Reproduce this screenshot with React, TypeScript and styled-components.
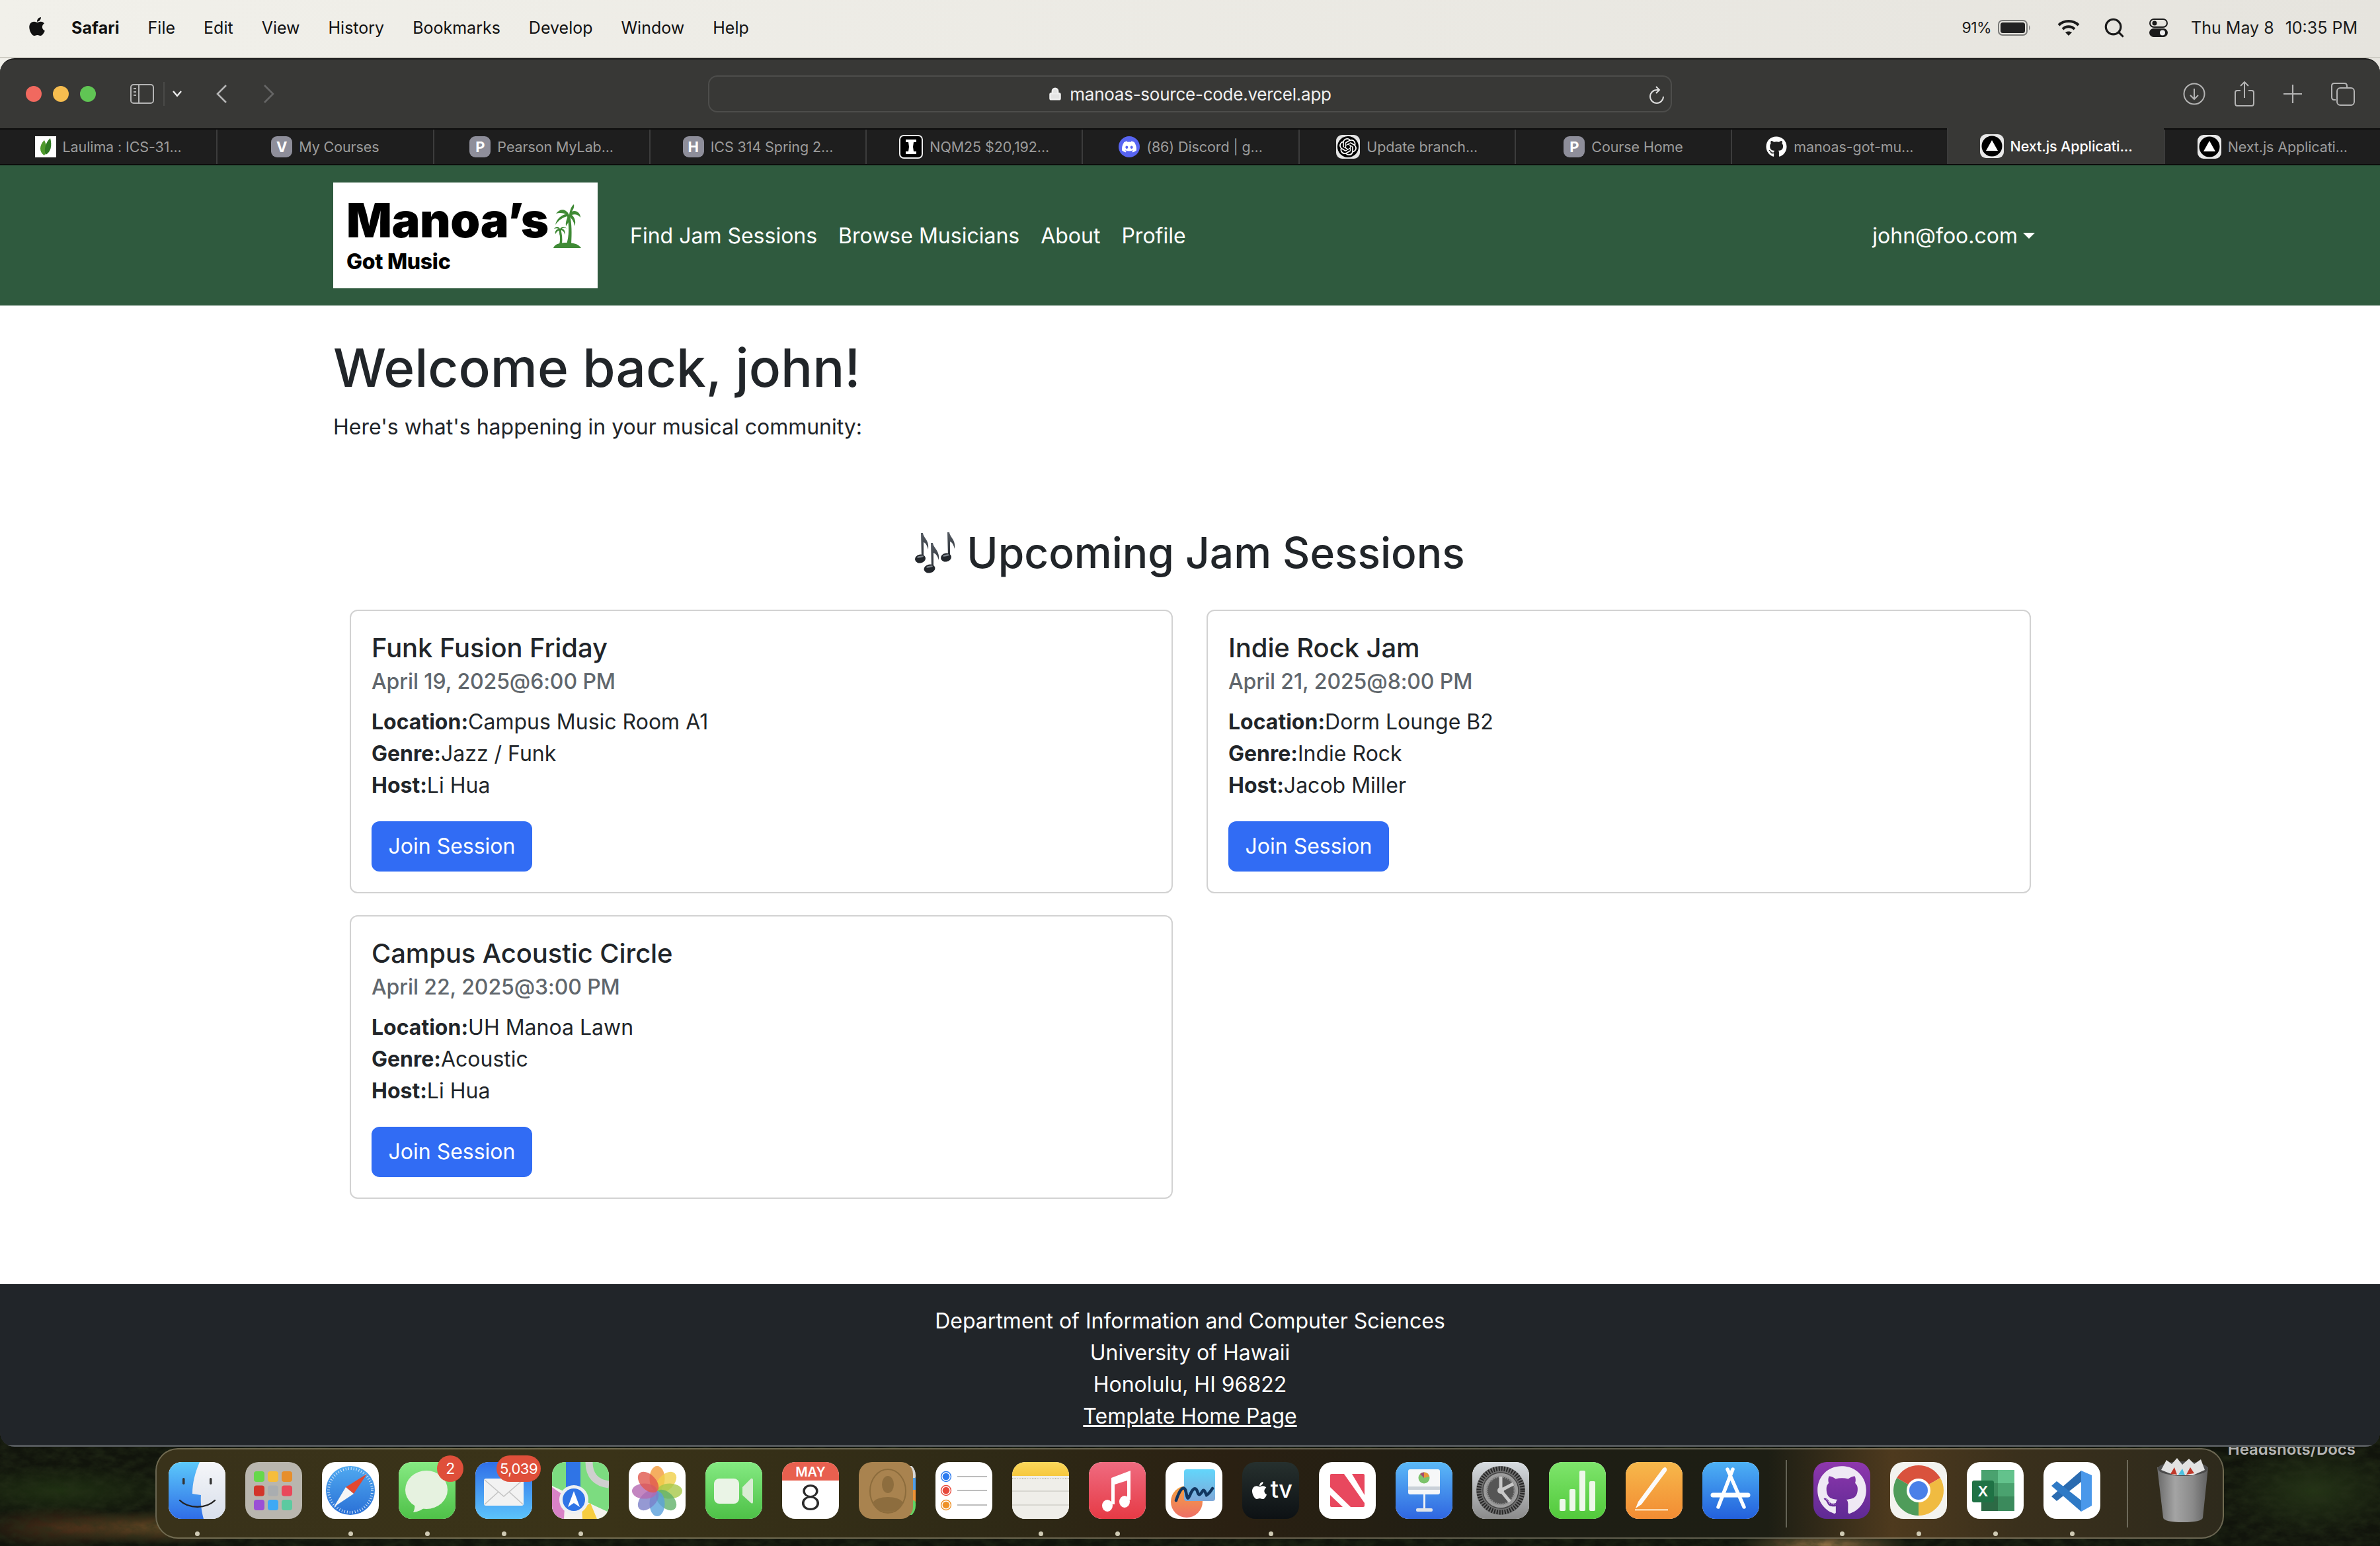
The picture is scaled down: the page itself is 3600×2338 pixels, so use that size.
import React from "react";
import styled, { createGlobalStyle } from "styled-components";
import { FaApple, FaDiscord, FaGithub } from "react-icons/fa";
import { SiOpenai } from "react-icons/si";
import { Lock, Search } from "lucide-react";

const GlobalStyle = createGlobalStyle`
  html, body { margin: 0; padding: 0; background: #12160c; }
  body { font-family: Inter, "Liberation Sans", sans-serif; color: #212529; }
  * { box-sizing: border-box; }
`;

const Desktop = styled.div`
  position: relative;
  width: 3600px;
  height: 2338px;
  overflow: hidden;
  display: flex;
  flex-direction: column;
  background: linear-gradient(90deg, #f1f0ea, #e6e4de) top / 100% 200px no-repeat, #12160c;
`;

/* ---- menu bar ---- */
const MenuBar = styled.header`
  flex: none;
  height: 88px;
  display: flex;
  align-items: center;
  padding: 0 34px 2px 42px;
  font-size: 25px;
  color: #111;
  border-bottom: 2px solid #cfcdc5;
`;
const AppleMark = styled(FaApple)`
  width: 28px;
  height: 32px;
  margin-right: 38px;
  margin-top: -4px;
`;
const MenuItems = styled.nav`
  display: flex;
  gap: 43px;
`;
const MenuItem = styled.span<{ $bold?: boolean }>`
  font-weight: ${(p) => (p.$bold ? 700 : 400)};
  letter-spacing: ${(p) => (p.$bold ? "0.1px" : "0")};
`;
const StatusArea = styled.div`
  margin-left: auto;
  display: flex;
  align-items: center;
  color: #1a1a1a;
`;
const BatteryText = styled.span`
  font-size: 23px;
  letter-spacing: -0.5px;
  margin-right: 10px;
`;
const StatusSlot = styled.span<{ $gap: number }>`
  display: flex;
  margin-left: ${(p) => p.$gap}px;
`;
const StatusClock = styled.span`
  margin-left: 35px;
  font-size: 25px;
  display: flex;
  gap: 17px;
`;

/* ---- browser window ---- */
const BrowserWindow = styled.div`
  position: relative;
  z-index: 1;
  flex: none;
  height: 2100px;
  display: flex;
  flex-direction: column;
  border-radius: 22px;
  overflow: hidden;
  border-top: 2px solid #1a1a1a;
  background: #383836;
`;
const Toolbar = styled.div`
  flex: none;
  height: 104px;
  display: grid;
  grid-template-columns: 1fr 1458px 1fr;
  align-items: center;
  background: #383836;
`;
const ToolbarLeft = styled.div`
  display: flex;
  align-items: center;
  padding-left: 39px;
  color: #b4b4b4;
`;
const ToolSlot = styled.span<{ $gap: number; $color?: string }>`
  display: flex;
  margin-left: ${(p) => p.$gap}px;
  color: ${(p) => p.$color || "inherit"};
`;
const ToolDivider = styled.span`
  width: 2px;
  height: 36px;
  margin-left: 14px;
  background: #4a4a48;
`;
const ToolbarRight = styled.div`
  display: flex;
  align-items: center;
  justify-content: flex-end;
  gap: 44px;
  padding-right: 38px;
  color: #b4b4b4;
`;
const TrafficLights = styled.div`
  display: flex;
  gap: 17px;
  margin-right: 52px;
`;
const TrafficLight = styled.span<{ $color: string }>`
  width: 24px;
  height: 24px;
  border-radius: 50%;
  background: ${(p) => p.$color};
`;
const AddressBar = styled.div`
  position: relative;
  height: 56px;
  display: flex;
  align-items: center;
  justify-content: center;
  gap: 12px;
  border: 2px solid #4d4d4b;
  border-radius: 14px;
  color: #f0f0f0;
  font-size: 26px;
  letter-spacing: -0.25px;
`;
const ReloadSlot = styled.span`
  position: absolute;
  right: 9px;
  top: 14px;
  color: #dcdcdc;
  display: flex;
`;
const TabStrip = styled.div`
  flex: none;
  height: 56px;
  display: grid;
  grid-template-columns: repeat(11, 1fr);
  background: #1e1e1e;
  border-top: 2px solid #0c0c0c;
  border-bottom: 2px solid #0c0c0c;
`;
const Tab = styled.div<{ $active?: boolean }>`
  display: flex;
  align-items: center;
  justify-content: center;
  gap: 10px;
  font-size: 21.5px;
  letter-spacing: -0.1px;
  white-space: nowrap;
  color: ${(p) => (p.$active ? "#fff" : "#9c9c9c")};
  font-weight: ${(p) => (p.$active ? 500 : 400)};
  background: ${(p) => (p.$active ? "#383836" : "transparent")};
  border-left: 2px solid #3c3c3c;
  margin-top: ${(p) => (p.$active ? "-2px" : "0")};
  &:first-child { border-left: none; }
`;
const FavLetter = styled.span`
  width: 32px;
  height: 32px;
  border-radius: 9px;
  background: #8e8e9a;
  color: #fff;
  font-size: 22px;
  font-weight: 700;
  display: flex;
  align-items: center;
  justify-content: center;
`;
const FavDiscord = styled.span`
  width: 32px;
  height: 32px;
  border-radius: 50%;
  background: #5865f2;
  color: #fff;
  display: flex;
  align-items: center;
  justify-content: center;
`;
const FavRound = styled.span`
  width: 36px;
  height: 36px;
  border-radius: 9px;
  background: #e4e4e4;
  display: flex;
  align-items: center;
  justify-content: center;
`;
const FavDisc = styled.span`
  width: 32px;
  height: 32px;
  border-radius: 50%;
  background: #000;
  color: #fff;
  display: flex;
  align-items: center;
  justify-content: center;
`;

/* ---- site navbar ---- */
const SiteNav = styled.nav`
  flex: none;
  height: 212px;
  background: #2f5a3e;
  display: flex;
  align-items: center;
  padding: 0 522px 0 504px;
  color: #fff;
  font-size: 32px;
`;
const Logo = styled.div`
  width: 400px;
  height: 160px;
  margin-right: 49px;
  background: #fff;
  color: #000;
  display: flex;
  flex-direction: column;
  padding: 21px 0 0 20px;
  position: relative;
`;
const LogoTitle = styled.span`
  font-size: 72px;
  line-height: 72px;
  font-weight: 900;
  letter-spacing: -0.4px;
`;
const LogoSub = styled.span`
  margin-top: 9px;
  font-size: 32px;
  line-height: 36px;
  font-weight: 800;
  letter-spacing: -0.3px;
`;
const PalmSlot = styled.span`
  position: absolute;
  left: 333px;
  top: 33px;
  display: flex;
`;
const NavLinks = styled.div`
  display: flex;
  gap: 32px;
`;
const NavLink = styled.a`
  color: #fff;
  text-decoration: none;
`;
const UserMenu = styled.div`
  margin-left: auto;
  display: flex;
  align-items: center;
  gap: 8px;
`;
const Caret = styled.span`
  width: 0;
  height: 0;
  border-left: 9px solid transparent;
  border-right: 9px solid transparent;
  border-top: 9px solid #fff;
`;

/* ---- page ---- */
const Main = styled.main`
  flex: none;
  height: 1480px;
  background: #fff;
  padding: 46px 504px 0;
`;
const Title = styled.h1`
  margin: 0 0 18px;
  font-size: 80px;
  line-height: 96px;
  font-weight: 500;
`;
const Lead = styled.p`
  margin: 0 0 127px;
  font-size: 32px;
  line-height: 48px;
`;
const SectionHead = styled.h2`
  margin: 0 0 48px;
  display: flex;
  align-items: center;
  justify-content: center;
  gap: 16px;
  font-size: 64px;
  line-height: 77px;
  font-weight: 500;
`;
const CardGrid = styled.div`
  margin-left: 25px;
  display: grid;
  grid-template-columns: 1245px 1247px;
  column-gap: 51px;
  row-gap: 33px;
  align-items: start;
`;
const Card = styled.article`
  height: 429px;
  border: 2px solid #d2d2d2;
  border-radius: 12px;
  padding: 32px 32px 32px 31px;
`;
const CardTitle = styled.h5`
  margin: 0 0 8px;
  font-size: 40px;
  line-height: 48px;
  font-weight: 500;
  letter-spacing: -0.1px;
`;
const CardDate = styled.h6`
  margin: 0 0 18px;
  font-size: 32px;
  line-height: 38px;
  font-weight: 500;
  color: #61676d;
  letter-spacing: -0.1px;
`;
const CardLine = styled.div`
  font-size: 32px;
  line-height: 48px;
  strong { font-weight: 700; }
`;
const JoinButton = styled.button`
  display: block;
  margin-top: 30px;
  height: 76px;
  width: 243px;
  padding: 0;
  border: none;
  border-radius: 12px;
  background: #316cf4;
  color: #fff;
  font: 400 32px/48px Inter, "Liberation Sans", sans-serif;
`;
const Footer = styled.footer`
  flex: 1;
  background: #212529;
  color: #fff;
  padding-top: 32px;
  text-align: center;
  font-size: 32px;
  line-height: 48px;
  border-bottom: 3px solid #55595c;
  a { color: #fff; text-decoration: underline; }
`;

/* ---- wallpaper and dock ---- */
const DesktopStrip = styled.div`
  position: relative;
  flex: 1;
  margin-top: -24px;
  padding: 26px 0 0 235px;
  background:
    radial-gradient(ellipse 170px 26px at 240px 146px, #6a4a26 0, transparent 100%),
    radial-gradient(ellipse 130px 20px at 2760px 172px, #8e6f45 0, transparent 100%),
    radial-gradient(ellipse 130px 32px at 90px 146px, #4a2c18 0, transparent 100%),
    radial-gradient(ellipse 190px 40px at 90px 90px, #1f3012 0, transparent 100%),
    radial-gradient(ellipse 140px 70px at 3500px 90px, #243416 0, transparent 100%),
    #11140c;
`;
const GrainLayer = styled.svg`
  position: absolute;
  inset: 0;
  opacity: 0.55;
`;
const DesktopLabel = styled.span`
  position: absolute;
  right: 37px;
  top: 16px;
  font-size: 24px;
  line-height: 24px;
  font-weight: 600;
  color: #b4b4b4;
  white-space: nowrap;
`;
const Dock = styled.div`
  position: relative;
  width: 3129px;
  height: 137px;
  display: flex;
  align-items: flex-start;
  gap: 30px;
  padding: 19px 0 0 18px;
  border: 2px solid rgba(205, 200, 170, 0.38);
  border-radius: 34px;
  background: linear-gradient(
    90deg,
    #39321a 0%,
    #3a3318 22%,
    #2f2a16 40%,
    #2a2012 52%,
    #1e1e14 66%,
    #1d1e14 78%,
    #4e3a1e 84%,
    #3a301c 90%,
    #2e2a1c 100%
  );
`;
const DockSlot = styled.div<{ $running?: boolean }>`
  position: relative;
  flex: none;
  width: 86px;
  height: 86px;
  &::after {
    content: "";
    display: ${(p) => (p.$running ? "block" : "none")};
    position: absolute;
    left: 40px;
    top: 105px;
    width: 7px;
    height: 7px;
    border-radius: 50%;
    background: #cfcab4;
  }
`;
const Tile = styled.div<{ $bg?: string }>`
  width: 86px;
  height: 86px;
  border-radius: 20px;
  overflow: hidden;
  background: ${(p) => p.$bg || "#fff"};
  display: flex;
  align-items: center;
  justify-content: center;
  svg { display: block; flex: none; }
`;
const Badge = styled.span`
  position: absolute;
  top: -10px;
  right: -12px;
  min-width: 40px;
  height: 40px;
  padding: 0 7px;
  border-radius: 20px;
  background: #df4f3a;
  color: #fff;
  font-size: 23px;
  line-height: 40px;
  text-align: center;
  letter-spacing: -0.5px;
`;
const WideBadge = styled(Badge)`
  right: -13px;
  min-width: 67px;
  padding: 0 4px;
  font-size: 22px;
`;
const DockDivider = styled.span`
  flex: none;
  width: 2px;
  height: 102px;
  margin: -3px 10px 0;
  background: rgba(220, 220, 205, 0.35);
`;
const TrashArt = styled.svg`
  display: block;
  margin-top: -6px;
`;

const Icon = ({ children }: { children: React.ReactNode }) => (
  <svg viewBox="0 0 86 86" width="86" height="86">
    {children}
  </svg>
);

const Grad = ({ id, from, to }: { id: string; from: string; to: string }) => (
  <defs>
    <linearGradient id={id} x1="0" y1="0" x2="0" y2="1">
      <stop offset="0" stopColor={from} />
      <stop offset="1" stopColor={to} />
    </linearGradient>
  </defs>
);

const FinderIcon = () => (
  <Icon>
    <Grad id="fa" from="#5cc9fb" to="#2f6de6" />
    <Grad id="fb" from="#f5f6f9" to="#d8dfeb" />
    <rect width="86" height="86" fill="url(#fb)" />
    <path d="M0 0H47C40 16 36 32 36 48L49 50C48 62 50 76 53 86H0Z" fill="url(#fa)" />
    <rect x="21" y="24" width="3.5" height="10" rx="1.7" fill="#333" />
    <rect x="62" y="24" width="3.5" height="10" rx="1.7" fill="#333" />
    <path d="M17 58C30 71 57 71 70 58" fill="none" stroke="#222" strokeWidth="2.4" strokeLinecap="round" />
  </Icon>
);

const launchColors = [
  ["#66d84a", "#f5bd3b", "#e78f2c"],
  ["#d2352a", "#a9adb0", "#e9485a"],
  ["#9a4fd6", "#3fa9f5", "#5ccaa0"],
];
const LaunchpadIcon = () => (
  <Icon>
    {launchColors.map((row, r) =>
      row.map((c, i) => (
        <rect key={c} x={13 + i * 21} y={14 + r * 21.5} width="16" height="16" rx="4" fill={c} />
      )),
    )}
  </Icon>
);

const SafariIcon = () => (
  <Icon>
    <Grad id="sa" from="#4fa9f0" to="#2a70d6" />
    <circle cx="43" cy="43" r="37" fill="url(#sa)" />
    <circle cx="43" cy="43" r="33" fill="none" stroke="#dcecfb" strokeWidth="4" strokeDasharray="1 3" />
    <polygon points="68,18 36,38 48,48" fill="#e2482f" />
    <polygon points="18,68 36,38 48,48" fill="#f5f5f5" />
  </Icon>
);

const MessagesIcon = () => (
  <Icon>
    <Grad id="ma" from="#86ea83" to="#4fc148" />
    <rect width="86" height="86" fill="url(#ma)" />
    <ellipse cx="42" cy="42" rx="32" ry="29" fill="#e6f2e0" />
    <path d="M24 62C25 68 24 72 22 76C30 75 36 72 40 68Z" fill="#e6f2e0" />
  </Icon>
);

const MailIcon = () => (
  <Icon>
    <Grad id="ml" from="#2f6fe8" to="#5cc3fb" />
    <rect width="86" height="86" fill="url(#ml)" />
    <rect x="13" y="25" width="60" height="41" rx="3" fill="#f2f2f2" />
    <path d="M14 27L43 52L72 27M14 64L35 45M72 64L51 45" fill="none" stroke="#c4c4c4" strokeWidth="1.6" />
  </Icon>
);

const MapsIcon = () => (
  <Icon>
    <rect width="86" height="86" fill="#7cdc80" />
    <path d="M0 36L86 76V86H0Z" fill="#f4f2ee" />
    <polygon points="0,38 20,52 18,86 0,86" fill="#d982c6" />
    <polygon points="45,70 58,62 68,86 46,86" fill="#f6cd3f" />
    <path d="M56 0C56 22 68 32 86 34" fill="none" stroke="#cfcfcf" strokeWidth="11" />
    <rect x="21" y="0" width="22" height="38" fill="#2f74e6" />
    <circle cx="33" cy="57" r="22" fill="#eef0f2" />
    <circle cx="33" cy="57" r="17" fill="#2f74e6" />
    <path d="M33 44L42 68L33 62L24 68Z" fill="#fff" />
  </Icon>
);

const petals = ["#f29a38", "#f0d048", "#a8c84a", "#62b26a", "#5aa0dc", "#7a80c8", "#b468b0", "#e0574e"];
const PhotosIcon = () => (
  <Icon>
    {petals.map((c, i) => (
      <ellipse key={c} cx="43" cy="25" rx="11.5" ry="19" fill={c} opacity="0.8" transform={`rotate(${i * 45} 43 44)`} />
    ))}
  </Icon>
);

const FaceTimeIcon = () => (
  <Icon>
    <Grad id="ft" from="#84ea82" to="#4ec147" />
    <rect width="86" height="86" fill="url(#ft)" />
    <rect x="13" y="25" width="38" height="38" rx="8" fill="#eaf4e6" />
    <path d="M56 38L69 25Q72 24 72 28V60Q72 64 69 62L56 50Z" fill="#d9ecd4" />
  </Icon>
);

const CalendarArt = styled.svg`
  text { font-family: Inter, "Liberation Sans", sans-serif; text-anchor: middle; }
`;
const CalendarIcon = () => (
  <CalendarArt viewBox="0 0 86 86" width="86" height="86">
    <rect width="86" height="28" fill="#e8604f" />
    <text x="43" y="22" fontSize="20" fontWeight="600" fill="#fff">MAY</text>
    <text x="43" y="73" fontSize="54" fontWeight="300" fill="#2b2b2b">8</text>
  </CalendarArt>
);

const ContactsIcon = () => (
  <Icon>
    <rect x="70" y="6" width="16" height="20" rx="4" fill="#d8d8d8" />
    <rect x="70" y="24" width="16" height="18" fill="#4f9ee8" />
    <rect x="70" y="42" width="16" height="18" fill="#ee9234" />
    <rect x="70" y="58" width="16" height="22" rx="4" fill="#62d462" />
    <rect x="0" y="0" width="82" height="86" rx="18" fill="#a9834f" />
    <ellipse cx="44" cy="44" rx="27" ry="33" fill="none" stroke="#8c6c3c" strokeWidth="2" />
    <ellipse cx="44" cy="34" rx="9" ry="13" fill="#8d6d3e" />
    <path d="M21 62C26 50 62 50 67 62C60 80 28 80 21 62Z" fill="#8d6d3e" />
  </Icon>
);

const remindRows = [
  { y: 22, c: "#2d7cf0" },
  { y: 43, c: "#e84a3c" },
  { y: 65, c: "#ee9229" },
];
const RemindersIcon = () => (
  <Icon>
    {remindRows.map((r) => (
      <g key={r.y}>
        <circle cx="16" cy={r.y} r="7.5" fill="none" stroke={r.c} strokeWidth="1.4" />
        <circle cx="16" cy={r.y} r="5.3" fill={r.c} />
        <rect x="33" y={r.y - 1} width="45" height="2" fill="#bdbdbd" />
      </g>
    ))}
  </Icon>
);

const NotesIcon = () => (
  <Icon>
    <Grad id="nt" from="#fbd75c" to="#f6c83d" />
    <rect width="86" height="21" fill="url(#nt)" />
    <rect y="21" width="86" height="65" fill="#efeee9" />
    <line x1="0" y1="25" x2="86" y2="25" stroke="#bdbcb5" strokeWidth="2" strokeDasharray="1 1.5" />
    <rect y="43" width="86" height="2" fill="#d8d7d1" />
    <rect y="64" width="86" height="2" fill="#d8d7d1" />
  </Icon>
);

const MusicIcon = () => (
  <Icon>
    <Grad id="mu" from="#ef6b80" to="#e63a45" />
    <rect width="86" height="86" fill="url(#mu)" />
    <path d="M34 24L63 13V57H58V28L39 34V64H34Z" fill="#fff" />
    <ellipse cx="28" cy="66" rx="8" ry="9" fill="#fff" />
    <ellipse cx="54" cy="60" rx="8" ry="9" fill="#fff" />
  </Icon>
);

const FreeformIcon = () => (
  <Icon>
    <Grad id="ffa" from="#f4a341" to="#ee6f66" />
    <Grad id="ffb" from="#62d6fb" to="#7fa8d8" />
    <circle cx="32" cy="60" r="24" fill="url(#ffa)" />
    <rect x="28" y="11" width="47" height="48" rx="4" fill="url(#ffb)" />
    <path d="M16 58C20 46 26 34 30 42C33 52 32 60 37 50C40 42 45 36 48 44C50 52 52 50 56 44C58 40 60 46 62 50C66 48 68 44 71 40" fill="none" stroke="#12365f" strokeWidth="4.5" strokeLinecap="round" />
  </Icon>
);

const TvWord = styled.span`
  color: #fff;
  font-size: 36px;
  font-weight: 500;
  letter-spacing: -0.5px;
  margin-left: 2px;
  margin-top: -4px;
`;
const TvIcon = () => (
  <>
    <FaApple color="#fff" size={30} />
    <TvWord>tv</TvWord>
  </>
);

const NewsIcon = () => (
  <Icon>
    <rect x="17" y="18" width="52" height="50" rx="2" fill="#e8485e" />
    <polygon points="38,18 50,18 69,50 69,62" fill="#fff" />
    <polygon points="17,38 17,50 36,68 48,68" fill="#fff" />
  </Icon>
);

const KeynoteIcon = () => (
  <Icon>
    <Grad id="kn" from="#5bb9f8" to="#2f66e0" />
    <rect width="86" height="86" fill="url(#kn)" />
    <rect x="42" y="48" width="3" height="24" fill="#eef2f6" />
    <rect x="31" y="70" width="25" height="5" rx="2" fill="#dfe4e9" />
    <rect x="19" y="11" width="48" height="38" rx="3" fill="#f6f7f8" />
    <rect x="19" y="37" width="48" height="5" fill="#c9d0d8" />
    <circle cx="43" cy="24" r="8.5" fill="#7cc36b" />
    <path d="M43 24V15.5A8.5 8.5 0 0 1 51 22Z" fill="#e8963a" />
    <path d="M43 24L37 18A8.5 8.5 0 0 1 43 15.5Z" fill="#a84c6a" />
  </Icon>
);

const SettingsIcon = () => (
  <Icon>
    <Grad id="st" from="#d8dde1" to="#8a8a8a" />
    <rect width="86" height="86" fill="url(#st)" />
    <circle cx="43" cy="43" r="37" fill="#6f6f6f" />
    <circle cx="43" cy="43" r="33" fill="none" stroke="#262626" strokeWidth="7" strokeDasharray="2 2" />
    <circle cx="43" cy="43" r="27" fill="#9d9d9d" stroke="#444" strokeWidth="1.5" />
    <circle cx="43" cy="43" r="21" fill="#555" />
    <circle cx="43" cy="43" r="21" fill="none" stroke="#8a8a8a" strokeWidth="3" strokeDasharray="2 1.5" />
    <path d="M43 43V22M43 43L62 33M43 43L57 60" stroke="#c9c9c9" strokeWidth="5" fill="none" />
    <circle cx="43" cy="43" r="5" fill="#c9c9c9" />
  </Icon>
);

const numberBars = [
  { x: 16, y: 56 },
  { x: 31, y: 41 },
  { x: 46, y: 13 },
  { x: 61, y: 29 },
];
const NumbersIcon = () => (
  <Icon>
    <Grad id="nb" from="#7ee56c" to="#52c93b" />
    <rect width="86" height="86" fill="url(#nb)" />
    {numberBars.map((b) => (
      <rect key={b.x} x={b.x} y={b.y} width="9" height={74 - b.y} rx="2" fill="#eef8ea" />
    ))}
  </Icon>
);

const PagesIcon = () => (
  <Icon>
    <Grad id="pg" from="#f7b84b" to="#f28c33" />
    <rect width="86" height="86" fill="url(#pg)" />
    <rect x="14" y="71" width="50" height="2.5" fill="#fbd9ae" />
    <path d="M15 70L19 60L56 10Q60 6 62 10Q63 13 60 16L24 64Z" fill="#fbfbfb" />
  </Icon>
);

const AppStoreIcon = () => (
  <Icon>
    <Grad id="as" from="#4db1f5" to="#2360dc" />
    <rect width="86" height="86" fill="url(#as)" />
    <path d="M46 11L24 68M38 11L63 68" stroke="#fff" strokeWidth="5.5" strokeLinecap="round" />
    <path d="M16 50H69" stroke="#fff" strokeWidth="7" strokeLinecap="round" />
  </Icon>
);

const GithubTile = styled(FaGithub)`
  color: #efe9f4;
`;
const GithubDesktopIcon = () => <GithubTile size={76} />;

const ChromeIcon = () => (
  <Icon>
    <path d="M10.1 24A38 38 0 0 1 75.9 24L43 43Z" fill="#d9523d" />
    <path d="M75.9 24A38 38 0 0 1 43 81L43 43Z" fill="#f0bb41" />
    <path d="M43 81A38 38 0 0 1 10.1 24L43 43Z" fill="#4f9c5a" />
    <circle cx="43" cy="43" r="18" fill="#fff" />
    <circle cx="43" cy="43" r="14" fill="#4a80e8" />
  </Icon>
);

const ExcelArt = styled.svg`
  text { font-family: Inter, "Liberation Sans", sans-serif; text-anchor: middle; }
`;
const ExcelIcon = () => (
  <ExcelArt viewBox="0 0 86 86" width="86" height="86">
    <rect x="22" y="12" width="50" height="20" fill="#4aa26f" />
    <rect x="47" y="12" width="25" height="20" fill="#63c28c" />
    <rect x="22" y="32" width="50" height="20" fill="#3b8a5c" />
    <rect x="47" y="32" width="25" height="20" fill="#4aa26f" />
    <rect x="22" y="52" width="50" height="22" fill="#2c6a45" />
    <rect x="47" y="52" width="25" height="22" fill="#3b8a5c" />
    <rect x="8" y="28" width="33" height="33" rx="3" fill="#1f7245" />
    <text x="24.5" y="52" fontSize="22" fontWeight="600" fill="#fff">X</text>
  </ExcelArt>
);

const VsCodeIcon = () => (
  <Icon>
    <polygon points="57,13 12,52 20,59 57,30" fill="#2a6bb0" />
    <polygon points="12,36 20,29 57,58 57,75" fill="#2f7ac6" />
    <polygon points="57,13 73,20 73,66 57,75" fill="#4a98ea" />
  </Icon>
);

const TrashIcon = () => (
  <TrashArt viewBox="0 0 86 97" width="86" height="97">
    <defs>
      <linearGradient id="tr" x1="0" y1="0" x2="1" y2="0">
        <stop offset="0" stopColor="#6a6a6a" />
        <stop offset="0.35" stopColor="#a4a4a4" />
        <stop offset="0.7" stopColor="#8a8a8a" />
        <stop offset="1" stopColor="#606060" />
      </linearGradient>
    </defs>
    <path d="M4 14L13 90Q14 97 43 97Q72 97 73 90L81 14Z" fill="url(#tr)" />
    <ellipse cx="43" cy="16" rx="38" ry="11" fill="#4c4c4c" />
    <path d="M10 18L18 3L26 9L34 0L42 10L52 1L60 9L70 2L76 18L58 26L30 26Z" fill="#e2e2e2" />
    <path d="M24 24L30 14L34 25ZM48 25L54 14L60 23Z" fill="#c0392b" />
    <path d="M36 25L42 16L46 26Z" fill="#4ac0e0" />
  </TrashArt>
);

const PalmTree = () => (
  <svg viewBox="0 0 42 66" width="42" height="66">
    <g fill="#3f8a35">
      <path d="M21 18C24 32 24 48 20 60H27C28 44 28 30 25 16Z" />
      <path d="M8 38C10 46 11 54 9 60H13C14 52 13 44 11 38Z" />
      <path d="M24 16C19 6 10 6 4 14C10 12 15 13 19 15C12 16 5 22 3 31C8 24 15 19 22 18C20 23 18 28 19 33C22 29 25 24 25 19C29 23 32 28 32 33C35 26 32 20 28 16C33 14 38 16 41 20C41 13 34 8 28 11C30 8 32 4 31 0C28 2 25 8 24 16Z" />
      <path d="M10 37C8 33 4 33 1 37C4 36 6 36 8 37C4 38 2 41 3 45C5 41 8 39 10 39C9 42 9 44 10 47C12 44 12 42 12 39C15 40 17 43 17 46C19 41 16 37 13 37C15 35 18 35 20 37C18 33 13 33 10 37Z" />
      <path d="M0 66C2 60 10 58 20 58C30 58 38 60 42 66Z" />
    </g>
  </svg>
);

const noteBody = "#2b3036";
const NotesGlyph = () => (
  <svg viewBox="14 13 62 62" width="62" height="62">
    <defs>
      <linearGradient id="nb2" x1="0" y1="0" x2="0" y2="1">
        <stop offset="0" stopColor="#555b63" />
        <stop offset="1" stopColor={noteBody} />
      </linearGradient>
    </defs>
    <g fill="url(#nb2)">
      <path d="M23 14H26C27 22 36 25 34 39C32 32 30 29 27 28V52H24Z" />
      <path d="M38 29H41C42 37 52 41 50 55C48 48 45 45 42 44V67H39Z" />
      <path d="M63 13H66C67 21 76 24 74 38C72 31 70 28 67 27V50H64Z" />
    </g>
    <g fill="#22262b">
      <ellipse cx="22" cy="53" rx="8" ry="6.5" transform="rotate(-12 22 53)" />
      <ellipse cx="36" cy="68" rx="8.5" ry="6.5" transform="rotate(-12 36 68)" />
      <ellipse cx="61" cy="51" rx="8" ry="6.5" transform="rotate(-12 61 51)" />
    </g>
    <g fill="#aab2ba" opacity="0.7">
      <ellipse cx="22" cy="50" rx="5" ry="1.4" transform="rotate(-12 22 50)" />
      <ellipse cx="36" cy="65" rx="5" ry="1.4" transform="rotate(-12 36 65)" />
      <ellipse cx="61" cy="48" rx="5" ry="1.4" transform="rotate(-12 61 48)" />
    </g>
  </svg>
);

const SidebarGlyph = () => (
  <svg viewBox="0 0 36 30" width="36" height="30" fill="none" stroke="currentColor">
    <rect x="1" y="1" width="34" height="28" rx="4" strokeWidth="2" />
    <path d="M13 1V29" strokeWidth="2" />
    <path d="M5 7H9M5 12H9M5 17H9" strokeWidth="2" />
  </svg>
);
const DownChevron = () => (
  <svg viewBox="0 0 14 10" width="14" height="10" fill="none" stroke="#eee" strokeWidth="2.4">
    <path d="M1 1L7 8L13 1" />
  </svg>
);
const BackGlyph = ({ flip }: { flip?: boolean }) => (
  <svg viewBox="0 0 18 30" width="18" height="30" fill="none" stroke="currentColor" strokeWidth="2.6">
    <path d={flip ? "M2 2L15 15L2 28" : "M16 2L3 15L16 28"} />
  </svg>
);
const ReloadGlyph = () => (
  <svg viewBox="0 0 24 27" width="24" height="27" fill="none" stroke="currentColor" strokeWidth="2">
    <path d="M15 6H12A10 10 0 1 0 22 16" />
    <path d="M11 1L16 6L11 11" />
  </svg>
);
const PlusGlyph = () => (
  <svg viewBox="0 0 28 28" width="28" height="28" fill="none" stroke="currentColor" strokeWidth="2.2">
    <path d="M14 0V28M0 14H28" />
  </svg>
);

const DownloadGlyph = () => (
  <svg viewBox="0 0 34 34" width="34" height="34" fill="none" stroke="currentColor" strokeWidth="2">
    <circle cx="17" cy="17" r="15.5" />
    <path d="M17 9V25M11 19L17 25L23 19" />
  </svg>
);
const ShareGlyph = () => (
  <svg viewBox="0 0 30 38" width="30" height="38" fill="none" stroke="currentColor" strokeWidth="2">
    <path d="M9 14H4Q1 14 1 17V33Q1 37 4 37H26Q29 37 29 33V17Q29 14 26 14H21" />
    <path d="M15 25V1M9 7L15 1L21 7" />
  </svg>
);
const TabsGlyph = () => (
  <svg viewBox="0 0 36 35" width="36" height="35" fill="none" stroke="currentColor" strokeWidth="2">
    <path d="M7 26H5Q1 26 1 22V5Q1 1 5 1H20Q24 1 24 5V8" />
    <rect x="9" y="8" width="26" height="26" rx="5" />
  </svg>
);

const BatteryGlyph = () => (
  <svg viewBox="0 0 50 24" width="50" height="24">
    <rect x="1" y="1" width="43" height="22" rx="6" fill="none" stroke="#7a7a78" strokeWidth="2" />
    <rect x="4" y="4" width="37" height="16" rx="3.5" fill="#222" />
    <path d="M47 8Q50 12 47 16Z" fill="#7a7a78" />
  </svg>
);
const WifiGlyph = () => (
  <svg viewBox="0 0 34 26" width="34" height="26" fill="none" stroke="#1a1a1a" strokeWidth="4">
    <path d="M2 9C10 1 24 1 32 9" />
    <path d="M8 15C13 10 21 10 26 15" />
    <path d="M17 25L12 20C15 18 19 18 22 20Z" fill="#1a1a1a" stroke="none" />
  </svg>
);
const ControlGlyph = () => (
  <svg viewBox="0 0 28 28" width="28" height="28">
    <rect x="1" y="1" width="26" height="12" rx="6" fill="none" stroke="#1a1a1a" strokeWidth="2" />
    <circle cx="8" cy="7" r="3.5" fill="#1a1a1a" />
    <rect x="0" y="15" width="28" height="13" rx="6.5" fill="#1a1a1a" />
    <circle cx="20" cy="21.5" r="4" fill="#eee" />
  </svg>
);

const LeafFav = () => (
  <svg viewBox="0 0 32 32" width="32" height="32">
    <rect width="32" height="32" fill="#fff" />
    <path d="M14 29C6 24 6 14 14 6C18 14 19 22 14 29Z" fill="#4f9a2c" />
    <path d="M16 28C24 24 26 14 23 3C16 9 13 20 16 28Z" fill="#2f7a22" />
  </svg>
);
const InvestFav = () => (
  <svg viewBox="0 0 36 36" width="36" height="36">
    <rect x="1" y="1" width="34" height="34" rx="6" fill="#000" stroke="#eee" strokeWidth="2" />
    <path d="M10 7H26V11H22L21 18L22 25H26V29H10V25H14L15 18L14 11H10Z" fill="#fff" />
  </svg>
);
const VercelFav = () => (
  <svg viewBox="0 0 36 36" width="36" height="36">
    <rect width="36" height="36" rx="9" fill="#e8e8e8" />
    <circle cx="18" cy="18" r="15.5" fill="#000" />
    <polygon points="18,9 27,25 9,25" fill="#fff" />
  </svg>
);

type TabInfo = { fav: React.ReactNode; label: string; active?: boolean };

const tabs: TabInfo[] = [
  { fav: <LeafFav />, label: "Laulima : ICS-31..." },
  { fav: <FavLetter>V</FavLetter>, label: "My Courses" },
  { fav: <FavLetter>P</FavLetter>, label: "Pearson MyLab..." },
  { fav: <FavLetter>H</FavLetter>, label: "ICS 314 Spring 2..." },
  { fav: <InvestFav />, label: "NQM25 $20,192..." },
  { fav: <FavDiscord><FaDiscord size={24} /></FavDiscord>, label: "(86) Discord | g..." },
  { fav: <FavRound><FavDisc><SiOpenai size={26} /></FavDisc></FavRound>, label: "Update branch..." },
  { fav: <FavLetter>P</FavLetter>, label: "Course Home" },
  { fav: <FaGithub size={32} color="#fff" />, label: "manoas-got-mu..." },
  { fav: <VercelFav />, label: "Next.js Applicati...", active: true },
  { fav: <VercelFav />, label: "Next.js Applicati..." },
];

const sessions = [
  { title: "Funk Fusion Friday", date: "April 19, 2025@6:00 PM", location: "Campus Music Room A1", genre: "Jazz / Funk", host: "Li Hua" },
  { title: "Indie Rock Jam", date: "April 21, 2025@8:00 PM", location: "Dorm Lounge B2", genre: "Indie Rock", host: "Jacob Miller" },
  { title: "Campus Acoustic Circle", date: "April 22, 2025@3:00 PM", location: "UH Manoa Lawn", genre: "Acoustic", host: "Li Hua" },
];

const menuItems = ["File", "Edit", "View", "History", "Bookmarks", "Develop", "Window", "Help"];
const navLinks = ["Find Jam Sessions", "Browse Musicians", "About", "Profile"];

type DockApp = { id: string; art: React.ReactNode; bg?: string; running?: boolean; badge?: string };

const dockApps: DockApp[] = [
  { id: "finder", art: <FinderIcon />, running: true },
  { id: "launchpad", art: <LaunchpadIcon />, bg: "#b9b6ae" },
  { id: "safari", art: <SafariIcon />, running: true },
  { id: "messages", art: <MessagesIcon />, running: true, badge: "2" },
  { id: "mail", art: <MailIcon />, running: true, badge: "5,039" },
  { id: "maps", art: <MapsIcon />, running: true },
  { id: "photos", art: <PhotosIcon /> },
  { id: "facetime", art: <FaceTimeIcon /> },
  { id: "calendar", art: <CalendarIcon /> },
  { id: "contacts", art: <ContactsIcon />, bg: "transparent" },
  { id: "reminders", art: <RemindersIcon /> },
  { id: "notes", art: <NotesIcon />, running: true },
  { id: "music", art: <MusicIcon />, running: true },
  { id: "freeform", art: <FreeformIcon /> },
  { id: "tv", art: <TvIcon />, bg: "linear-gradient(#26302e, #0d1114)", running: true },
  { id: "news", art: <NewsIcon /> },
  { id: "keynote", art: <KeynoteIcon /> },
  { id: "settings", art: <SettingsIcon /> },
  { id: "numbers", art: <NumbersIcon /> },
  { id: "pages", art: <PagesIcon /> },
  { id: "appstore", art: <AppStoreIcon /> },
];

const pinnedApps: DockApp[] = [
  { id: "github", art: <GithubDesktopIcon />, bg: "linear-gradient(#8e37ad, #5f2a94)", running: true },
  { id: "chrome", art: <ChromeIcon />, bg: "#f3f3ef", running: true },
  { id: "excel", art: <ExcelIcon />, running: true },
  { id: "vscode", art: <VsCodeIcon />, running: true },
];

const DockItem = ({ app }: { app: DockApp }) => (
  <DockSlot $running={app.running}>
    <Tile $bg={app.bg}>{app.art}</Tile>
    {app.badge &&
      (app.badge.length > 2 ? <WideBadge>{app.badge}</WideBadge> : <Badge>{app.badge}</Badge>)}
  </DockSlot>
);

export default function App() {
  return (
    <>
      <GlobalStyle />
      <Desktop>
        <MenuBar>
          <AppleMark />
          <MenuItems>
            <MenuItem $bold>Safari</MenuItem>
            {menuItems.map((m) => (
              <MenuItem key={m}>{m}</MenuItem>
            ))}
          </MenuItems>
          <StatusArea>
            <BatteryText>91%</BatteryText>
            <BatteryGlyph />
            <StatusSlot $gap={40}><WifiGlyph /></StatusSlot>
            <StatusSlot $gap={35}><Search size={34} strokeWidth={2.2} /></StatusSlot>
            <StatusSlot $gap={36}><ControlGlyph /></StatusSlot>
            <StatusClock>
              <span>Thu May 8</span>
              <span>10:35 PM</span>
            </StatusClock>
          </StatusArea>
        </MenuBar>

        <BrowserWindow>
          <Toolbar>
            <ToolbarLeft>
              <TrafficLights>
                <TrafficLight $color="#f1695f" />
                <TrafficLight $color="#f6bd4f" />
                <TrafficLight $color="#60c554" />
              </TrafficLights>
              <SidebarGlyph />
              <ToolDivider />
              <ToolSlot $gap={12}><DownChevron /></ToolSlot>
              <ToolSlot $gap={51}><BackGlyph /></ToolSlot>
              <ToolSlot $gap={54} $color="#666"><BackGlyph flip /></ToolSlot>
            </ToolbarLeft>
            <AddressBar>
              <Lock size={20} strokeWidth={3} fill="#e4e4e4" />
              manoas-source-code.vercel.app
              <ReloadSlot>
                <ReloadGlyph />
              </ReloadSlot>
            </AddressBar>
            <ToolbarRight>
              <DownloadGlyph />
              <ShareGlyph />
              <PlusGlyph />
              <TabsGlyph />
            </ToolbarRight>
          </Toolbar>

          <TabStrip>
            {tabs.map((t, i) => (
              <Tab key={i} $active={t.active}>
                {t.fav}
                <span>{t.label}</span>
              </Tab>
            ))}
          </TabStrip>

          <SiteNav>
            <Logo>
              <LogoTitle>Manoa’s</LogoTitle>
              <LogoSub>Got Music</LogoSub>
              <PalmSlot>
                <PalmTree />
              </PalmSlot>
            </Logo>
            <NavLinks>
              {navLinks.map((l) => (
                <NavLink key={l} href="#">{l}</NavLink>
              ))}
            </NavLinks>
            <UserMenu>
              john@foo.com
              <Caret />
            </UserMenu>
          </SiteNav>

          <Main>
            <Title>Welcome back, john!</Title>
            <Lead>Here's what's happening in your musical community:</Lead>
            <SectionHead>
              <NotesGlyph />
              Upcoming Jam Sessions
            </SectionHead>
            <CardGrid>
              {sessions.map((s) => (
                <Card key={s.title}>
                  <CardTitle>{s.title}</CardTitle>
                  <CardDate>{s.date}</CardDate>
                  <CardLine><strong>Location:</strong>{s.location}</CardLine>
                  <CardLine><strong>Genre:</strong>{s.genre}</CardLine>
                  <CardLine><strong>Host:</strong>{s.host}</CardLine>
                  <JoinButton>Join Session</JoinButton>
                </Card>
              ))}
            </CardGrid>
          </Main>

          <Footer>
            <div>Department of Information and Computer Sciences</div>
            <div>University of Hawaii</div>
            <div>Honolulu, HI 96822</div>
            <a href="#">Template Home Page</a>
          </Footer>
        </BrowserWindow>

        <DesktopStrip>
          <GrainLayer width="3600" height="174">
            <filter id="grain">
              <feTurbulence type="fractalNoise" baseFrequency="0.05 0.09" numOctaves="4" seed="7" />
              <feColorMatrix values="0 0 0 0 0.02  0 0 0 0 0.03  0 0 0 0 0.01  1.8 0 0 0 -0.55" />
            </filter>
            <rect width="3600" height="174" filter="url(#grain)" />
          </GrainLayer>
          <DesktopLabel>Headshots/Docs</DesktopLabel>
          <Dock>
            {dockApps.map((a) => (
              <DockItem key={a.id} app={a} />
            ))}
            <DockDivider />
            {pinnedApps.map((a) => (
              <DockItem key={a.id} app={a} />
            ))}
            <DockDivider />
            <DockSlot>
              <TrashIcon />
            </DockSlot>
          </Dock>
        </DesktopStrip>
      </Desktop>
    </>
  );
}
